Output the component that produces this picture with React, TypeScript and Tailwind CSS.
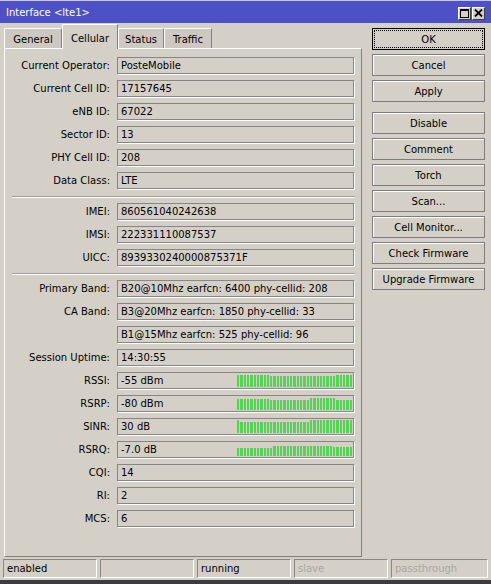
import React from "react";

const FONT = "font-['DejaVu_Sans',sans-serif]";

type Row =
  | { kind: "field"; label: string; value: string; bars?: [number, number][] }
  | { kind: "sep" };

const rows: Row[] = [
  { kind: "field", label: "Current Operator:", value: "PosteMobile" },
  { kind: "field", label: "Current Cell ID:", value: "17157645" },
  { kind: "field", label: "eNB ID:", value: "67022" },
  { kind: "field", label: "Sector ID:", value: "13" },
  { kind: "field", label: "PHY Cell ID:", value: "208" },
  { kind: "field", label: "Data Class:", value: "LTE" },
  { kind: "sep" },
  { kind: "field", label: "IMEI:", value: "860561040242638" },
  { kind: "field", label: "IMSI:", value: "222331110087537" },
  { kind: "field", label: "UICC:", value: "8939330240000875371F" },
  { kind: "sep" },
  { kind: "field", label: "Primary Band:", value: "B20@10Mhz earfcn: 6400 phy-cellid: 208" },
  { kind: "field", label: "CA Band:", value: "B3@20Mhz earfcn: 1850 phy-cellid: 33" },
  { kind: "field", label: "", value: "B1@15Mhz earfcn: 525 phy-cellid: 96" },
  { kind: "field", label: "Session Uptime:", value: "14:30:55" },
  { kind: "field", label: "RSSI:", value: "-55 dBm", bars: [[10, 12], [20, 11], [5, 12]] },
  { kind: "field", label: "RSRP:", value: "-80 dBm", bars: [[10, 11], [12, 10], [8, 12], [5, 10]] },
  { kind: "field", label: "SINR:", value: "30 dB", bars: [[1, 13], [21, 11], [13, 13]] },
  { kind: "field", label: "RSRQ:", value: "-7.0 dB", bars: [[11, 8], [18, 10], [6, 9]] },
  { kind: "field", label: "CQI:", value: "14" },
  { kind: "field", label: "RI:", value: "2" },
  { kind: "field", label: "MCS:", value: "6" },
];

const buttons = [
  "OK",
  "Cancel",
  "Apply",
  "Disable",
  "Comment",
  "Torch",
  "Scan...",
  "Cell Monitor...",
  "Check Firmware",
  "Upgrade Firmware",
];

function Bars({ segments }: { segments: [number, number][] }) {
  const heights: number[] = [];
  segments.forEach(([n, h]) => {
    for (let i = 0; i < n; i++) heights.push(h);
  });
  return (
    <div className="flex h-full w-[116px] flex-none items-end gap-px pb-[1px] pr-px">
      {heights.map((h, i) => (
        <div key={i} className="flex-1 bg-[#54d454]" style={{ height: h }} />
      ))}
    </div>
  );
}

function Field({ label, value, bars }: { label: string; value: string; bars?: [number, number][] }) {
  return (
    <div className="mb-[6px] flex items-center">
      <div className="w-[105px] flex-none text-right">{label}</div>
      <div className="ml-[7px] flex h-[17px] w-[237px] flex-none items-center border border-[#868686] pl-[3px] shadow-[1px_1px_0_#ffffff]">
        <span className="flex-1 truncate leading-none">{value}</span>
        {bars && <Bars segments={bars} />}
      </div>
    </div>
  );
}

function Tab({ label, active, w }: { label: string; active?: boolean; w: string }) {
  if (active) {
    return (
      <div
        className={`relative z-10 -mb-px flex h-[25px] ${w} items-start justify-center border-l border-t border-white border-r border-r-[#808080] bg-[#d4d0c8] pt-[6px]`}
      >
        {label}
      </div>
    );
  }
  return (
    <div
      className={`flex h-[20px] ${w} items-center justify-center border-l border-t border-white border-r border-r-[#808080] bg-[#cdc9c2] pt-[2px]`}
    >
      {label}
    </div>
  );
}

export default function App() {
  return (
    <div className={`${FONT} flex h-[584px] w-[491px] flex-col bg-[#d4d0c8] text-[10px] text-black`}>
      {/* Title bar */}
      <div className="flex h-[23px] flex-none items-center border-t border-[#c9c7e6] bg-[#4e51c6] pl-[6px] pr-[6px]">
        <span className="flex-1 text-white">Interface &lt;lte1&gt;</span>
        <div className="mt-[2px] flex gap-px">
          <div className="flex h-[13px] w-[13px] items-center justify-center border border-white border-b-[#404040] border-r-[#404040] bg-[#d4d0c8]">
            <svg width="9" height="9" viewBox="0 0 9 9">
              <rect x="0.5" y="0.5" width="8" height="8" fill="none" stroke="#000" />
              <line x1="0" y1="1.5" x2="9" y2="1.5" stroke="#000" />
            </svg>
          </div>
          <div className="flex h-[13px] w-[13px] items-center justify-center border border-white border-b-[#404040] border-r-[#404040] bg-[#d4d0c8]">
            <svg width="9" height="8" viewBox="0 0 9 8">
              <path d="M1 0.5 L8 7.5 M8 0.5 L1 7.5" stroke="#000" strokeWidth="1.8" />
            </svg>
          </div>
        </div>
      </div>

      {/* Body */}
      <div className="flex min-h-0 flex-1">
        <div className="flex w-[362px] flex-none flex-col pl-[4px]">
          {/* Tabs */}
          <div className="flex h-[25px] flex-none items-end pt-px">
            <Tab label="General" w="w-[58px]" />
            <Tab label="Cellular" w="w-[56px]" active />
            <Tab label="Status" w="w-[46px]" />
            <Tab label="Traffic" w="w-[48px]" />
          </div>
          {/* Panel */}
          <div className="mb-px flex flex-1 flex-col border-l border-t border-white border-b-[#808080] border-r border-r-[#808080] border-b pt-[8px]">
            {rows.map((r, i) =>
              r.kind === "sep" ? (
                <div
                  key={i}
                  className={`ml-[7px] mr-[6px] h-[2px] flex-none border-t border-[#a09d97] border-b border-b-white ${
                    i === 6 ? "mb-[5px] mt-px" : "mb-[5px] mt-px"
                  }`}
                />
              ) : (
                <Field key={i} label={r.label} value={r.value} bars={r.bars} />
              )
            )}
          </div>
        </div>

        {/* Buttons */}
        <div className="ml-[10px] flex w-[113px] flex-none flex-col pt-[5px]">
          {buttons.map((b, i) => (
            <div
              key={b}
              className={`flex h-[22px] flex-none items-center justify-center ${
                i === 0
                  ? "border border-black outline-1 outline-dotted outline-black outline-offset-[-3px]"
                  : "border border-[#7c7c7c] shadow-[inset_1px_1px_0_#ffffff]"
              } ${i === 2 ? "mb-[10px]" : "mb-[4px]"}`}
            >
              {b}
            </div>
          ))}
        </div>
      </div>

      {/* Status bar */}
      <div className="flex h-[26px] flex-none gap-[3px] border-b-[4px] border-[#3c3c3c] pl-[3px] pt-[1px]">
        {[
          { t: "enabled", w: "w-[94px]" },
          { t: "", w: "w-[94px]" },
          { t: "running", w: "w-[94px]" },
          { t: "slave", w: "w-[94px]", dim: true },
          { t: "passthrough", w: "w-[97px]", dim: true },
        ].map((c, i) => (
          <div
            key={i}
            className={`flex h-[19px] ${c.w} flex-none items-center border-l border-t border-[#8a8780] border-b border-b-white border-r border-r-white pl-[3px] ${
              c.dim ? "text-[#aba79f]" : ""
            }`}
          >
            {c.t}
          </div>
        ))}
      </div>
    </div>
  );
}
